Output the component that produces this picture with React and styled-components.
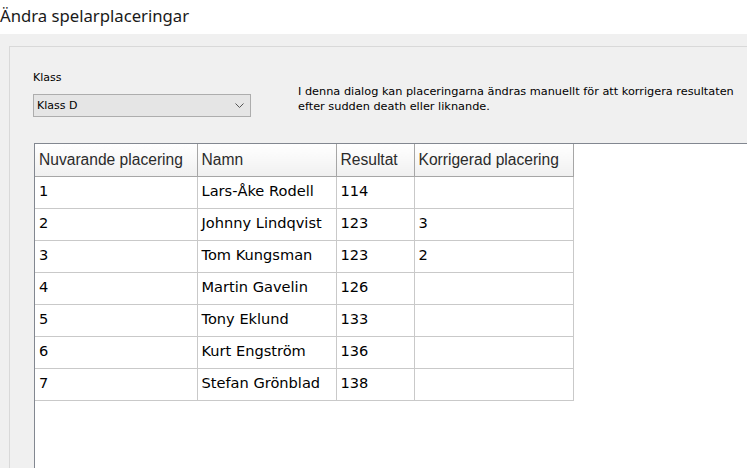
import React from "react";
import styled, { createGlobalStyle } from "styled-components";

const GlobalStyle = createGlobalStyle`
  html, body {
    margin: 0;
    padding: 0;
    background: #f0f0f0;
  }
`;

const Window = styled.div`
  width: 747px;
  height: 468px;
  overflow: hidden;
  display: flex;
  flex-direction: column;
  background: #f0f0f0;
`;

const TitleBar = styled.div`
  height: 34px;
  flex-shrink: 0;
  box-sizing: border-box;
  padding-bottom: 2px;
  background: #ffffff;
  font-family: "Noto Sans", "Open Sans", sans-serif;
  font-size: 16.7px;
  line-height: 32px;
  color: #1a1a1a;
`;

const Body = styled.div`
  flex: 1;
  padding: 12px 0 0 9px;
  display: flex;
  min-height: 0;
`;

const Panel = styled.div`
  flex: 1;
  border-top: 1px solid #d9d9d9;
  border-left: 1px solid #d9d9d9;
  padding: 23px 0 0 23px;
  display: flex;
  flex-direction: column;
  min-height: 0;
`;

const TopRow = styled.div`
  display: flex;
  align-items: flex-start;
  gap: 47px;
`;

const Field = styled.div`
  display: flex;
  flex-direction: column;
  gap: 8px;
`;

const Label = styled.div`
  font-family: "DejaVu Sans", sans-serif;
  font-size: 11px;
  line-height: 16px;
  color: #000;
`;

const Select = styled.div`
  width: 218px;
  height: 23px;
  box-sizing: border-box;
  border: 1px solid #adadad;
  background: #e5e5e5;
  display: flex;
  align-items: center;
  justify-content: space-between;
  padding: 0 6px 0 3px;
  font-family: "DejaVu Sans", sans-serif;
  font-size: 11px;
  color: #000;
`;

const Description = styled.div`
  margin-top: 14px;
  font-family: "DejaVu Sans", sans-serif;
  font-size: 11.3px;
  line-height: 15px;
  color: #000;
  white-space: nowrap;
`;

const Grid = styled.div`
  flex: 1;
  margin-top: 26px;
  margin-left: 1px;
  background: #ffffff;
  border-top: 1px solid #828790;
  border-left: 1px solid #828790;
  min-height: 0;
`;

const Table = styled.table`
  border-collapse: collapse;
  table-layout: fixed;
  width: 538px;
`;

const HeadCell = styled.th`
  width: ${(p) => p.$w}px;
  height: 32px;
  box-sizing: border-box;
  padding: 0 0 0 4px;
  text-align: left;
  font-family: "Liberation Sans", Arial, sans-serif;
  font-weight: normal;
  font-size: 15.6px;
  color: #2b2b2b;
  background: linear-gradient(#ffffff, #f0f0f0);
  border-right: 1px solid #a6a6a6;
  border-bottom: 1px solid #a6a6a6;
  white-space: nowrap;
`;

const Cell = styled.td`
  height: 32px;
  box-sizing: border-box;
  padding: 0 0 3px 4px;
  font-family: "DejaVu Sans", sans-serif;
  font-size: 14.6px;
  color: #000;
  border-right: 1px solid #c9c9c9;
  border-bottom: 1px solid #c9c9c9;
  white-space: nowrap;
`;

const columns = [
  { title: "Nuvarande placering", w: 162 },
  { title: "Namn", w: 139 },
  { title: "Resultat", w: 78 },
  { title: "Korrigerad placering", w: 159 },
];

const rows = [
  ["1", "Lars-Åke Rodell", "114", ""],
  ["2", "Johnny Lindqvist", "123", "3"],
  ["3", "Tom Kungsman", "123", "2"],
  ["4", "Martin Gavelin", "126", ""],
  ["5", "Tony Eklund", "133", ""],
  ["6", "Kurt Engström", "136", ""],
  ["7", "Stefan Grönblad", "138", ""],
];

function Chevron() {
  return (
    <svg width="9" height="5" viewBox="0 0 9 5">
      <path d="M0.5 0.5 L4.5 4.5 L8.5 0.5" fill="none" stroke="#555" strokeWidth="1" />
    </svg>
  );
}

export default function App() {
  return (
    <Window>
      <GlobalStyle />
      <TitleBar>Ändra spelarplaceringar</TitleBar>
      <Body>
        <Panel>
          <TopRow>
            <Field>
              <Label>Klass</Label>
              <Select>
                <span>Klass D</span>
                <Chevron />
              </Select>
            </Field>
            <Description>
              I denna dialog kan placeringarna ändras manuellt för att korrigera resultaten
              <br />
              efter sudden death eller liknande.
            </Description>
          </TopRow>

          <Grid>
            <Table>
              <thead>
                <tr>
                  {columns.map((c) => (
                    <HeadCell key={c.title} $w={c.w}>
                      {c.title}
                    </HeadCell>
                  ))}
                </tr>
              </thead>
              <tbody>
                {rows.map((r) => (
                  <tr key={r[0]}>
                    {r.map((v, i) => (
                      <Cell key={i}>{v}</Cell>
                    ))}
                  </tr>
                ))}
              </tbody>
            </Table>
          </Grid>
        </Panel>
      </Body>
    </Window>
  );
}
